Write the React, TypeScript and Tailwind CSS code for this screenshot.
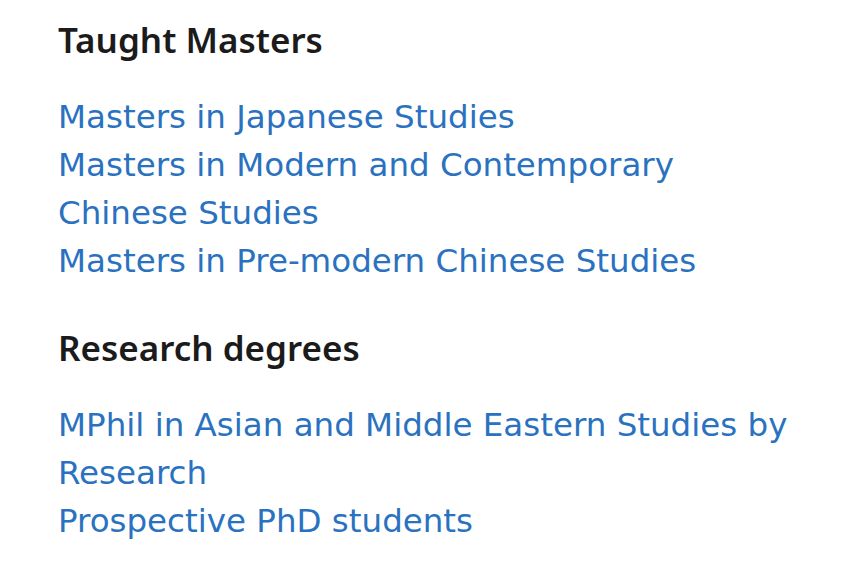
const sections = [
  {
    title: "Taught Masters",
    links: [
      "Masters in Japanese Studies",
      "Masters in Modern and Contemporary Chinese Studies",
      "Masters in Pre-modern Chinese Studies",
    ],
  },
  {
    title: "Research degrees",
    links: ["MPhil in Asian and Middle Eastern Studies by Research", "Prospective PhD students"],
  },
]

export default function App() {
  return (
    <div className="min-h-[580px] w-[856px] bg-white pl-[58px] pt-[18px]">
      <div className="w-[740px]">
        {sections.map((s) => (
          <div key={s.title} className="mb-[41px]">
            <h2
              className="mb-[31px] text-[35px] font-semibold leading-[44px] text-[#1b1b1b]"
              style={{ fontFamily: '"Noto Sans", "Open Sans", sans-serif' }}
            >
              {s.title}
            </h2>
            <ul>
              {s.links.map((l) => (
                <li key={l}>
                  <a
                    href="#"
                    className="text-[32.5px] leading-[48px] text-[#2a72bf]"
                    style={{ fontFamily: '"DejaVu Sans", Verdana, sans-serif' }}
                  >
                    {l}
                  </a>
                </li>
              ))}
            </ul>
          </div>
        ))}
      </div>
    </div>
  )
}
